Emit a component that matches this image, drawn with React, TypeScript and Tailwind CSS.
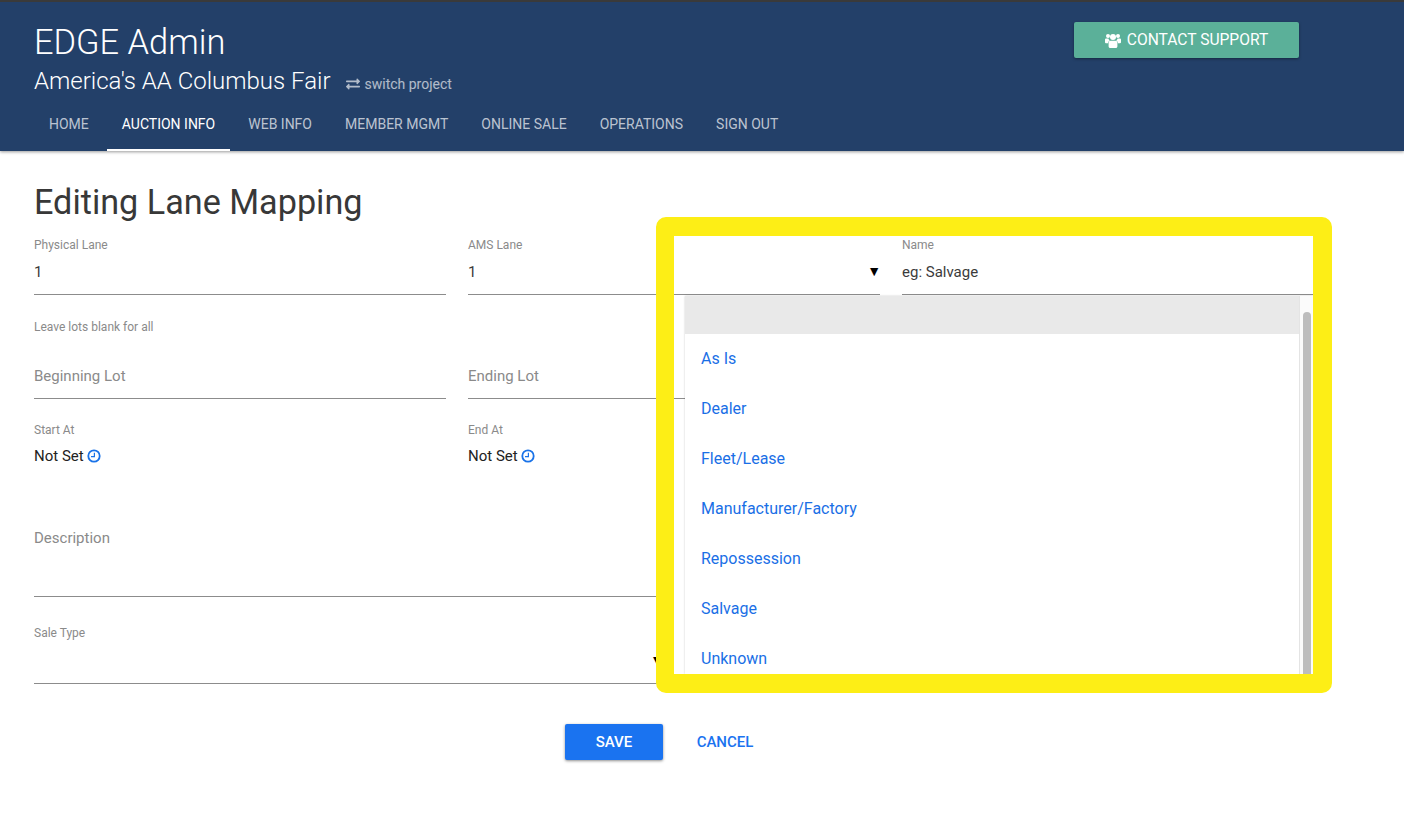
import { FaExchangeAlt } from "react-icons/fa";

const tabs = ["Home", "Auction Info", "Web Info", "Member Mgmt", "Online Sale", "Operations", "Sign Out"];
const saleTypes = ["As Is", "Dealer", "Fleet/Lease", "Manufacturer/Factory", "Repossession", "Salvage", "Unknown"];

function Clock() {
  return (
    <svg viewBox="0 0 14 14" className="ml-[3px] h-[14px] w-[14px]" fill="none" stroke="#1a73e8">
      <circle cx="7" cy="7" r="5.7" strokeWidth="1.8" />
      <path d="M7.4 3.8V7.6H4" strokeWidth="1.2" />
    </svg>
  );
}

function Users() {
  return (
    <svg viewBox="0 0 16 15" className="h-[15px] w-[16px]" fill="white">
      <circle cx="3" cy="3" r="2" />
      <circle cx="13" cy="3" r="2" />
      <circle cx="8" cy="4" r="3" />
      <path d="M0 6.5C0 5.8.6 5.4 1.2 5.4h2.2c.2.9.8 1.7 1.400 2.2-1 .5-1.600 1.400-1.700 2.600H.9C.4 10.200 0 9.800 0 9.300Z" />
      <path d="M16 6.500c0-.7-.6-1.100-1.200-1.100h-2.200c-.2.9-.8 1.700-1.400 2.200 1 .5 1.600 1.400 1.700 2.600h2.200c.5 0 .9-.4.900-.9Z" />
      <path d="M5.500 7.800h5c1.200 0 1.900.9 1.900 2.100v3.300c0 1-.7 1.800-1.700 1.800H5.300c-1 0-1.700-.8-1.700-1.800V9.900c0-1.200.7-2.100 1.900-2.100Z" />
    </svg>
  );
}

function Arrow() {
  return <span className="absolute right-[-1px] bottom-[16px] text-[14px] leading-none text-black">▼</span>;
}

function Field(props: { label?: string; value?: string; placeholder?: string; select?: boolean; className?: string }) {
  return (
    <div className={`relative flex flex-col justify-between border-b border-[#8c8c8c] ${props.className ?? "h-[59px]"}`}>
      <label className="h-[18px] text-[12px] leading-[18px] text-[#8a8a8a]">{props.label}</label>
      {props.value && <div className="mb-[12px] text-[15px] leading-[20px] text-[#3b3b3b]">{props.value}</div>}
      {props.placeholder && <div className="mb-[12px] text-[15px] leading-[20px] text-[#8a8a8a]">{props.placeholder}</div>}
      {props.select && <Arrow />}
    </div>
  );
}

export default function App() {
  return (
    <div className="relative min-h-[820px] bg-white font-['Roboto',sans-serif]">
      <header className="relative z-10 h-[151px] border-t-2 border-[#3a3a3a] bg-[#234069] shadow-[0_1px_3px_rgba(0,0,0,0.4)]">
        <div className="flex justify-between pl-[34px] pr-[105px]">
          <div>
            <h1 className="mt-[18px] text-[34.4px] leading-[44px] font-light text-white">EDGE Admin</h1>
            <div className="mt-[1px] flex items-baseline text-white">
              <span className="text-[24px] leading-[32px] font-light">America's AA Columbus Fair</span>
              <span className="relative top-[2px] ml-[16px] flex items-center gap-[4px] text-[14px] text-white/65">
                <FaExchangeAlt className="text-[14px]" />
                switch project
              </span>
            </div>
          </div>
          <button className="mt-[20px] flex h-[36px] w-[225px] items-center justify-center gap-[6px] rounded-[2px] bg-[#5bb099] text-[15.6px] text-white shadow-[0_1px_3px_rgba(0,0,0,0.4)]">
            <Users />
            <span className="mt-[2px]">CONTACT SUPPORT</span>
          </button>
        </div>
        <nav className="mt-[5px] flex gap-[3px] pl-[34px]">
          {tabs.map((tab) => (
            <a
              key={tab}
              className={`flex h-[49px] items-center border-b-2 px-[15px] pb-[2px] text-[14px] uppercase ${
                tab === "Auction Info" ? "border-white text-white" : "border-transparent text-white/70"
              }`}
            >
              {tab}
            </a>
          ))}
        </nav>
      </header>

      <main className="pl-[34px] pr-[90px]">
        <h2 className="mt-[29px] text-[34.2px] leading-[44px] text-[#383838]">Editing Lane Mapping</h2>

        <div className="mt-[12px] grid grid-cols-3 gap-x-[22px]">
          <Field label="Physical Lane" value="1" />
          <Field label="AMS Lane" value="1" select />
          <Field label="Name" value="eg: Salvage" />
        </div>

        <p className="mt-[24px] text-[12px] leading-[16px] text-[#8a8a8a]">Leave lots blank for all</p>

        <div className="mt-[16px] grid grid-cols-3 gap-x-[22px]">
          <Field placeholder="Beginning Lot" className="h-[48px]" />
          <Field placeholder="Ending Lot" className="h-[48px]" />
        </div>

        <div className="mt-[23px] grid grid-cols-3 gap-x-[22px]">
          {["Start At", "End At"].map((label) => (
            <div key={label}>
              <label className="block text-[12px] leading-[16px] text-[#8a8a8a]">{label}</label>
              <div className="mt-[8px] flex items-center text-[15px] leading-[20px] text-[#222222]">
                Not Set
                <Clock />
              </div>
            </div>
          ))}
        </div>

        <div className="mt-[48px] grid grid-cols-2 gap-x-[22px]">
          <div className="flex h-[83px] flex-col border-b border-[#8c8c8c] text-[15px] leading-[20px] text-[#8a8a8a]">
            <span className="mt-[14px]">Description</span>
          </div>
        </div>

        <div className="mt-[27px] grid grid-cols-2 gap-x-[22px]">
          <Field label="Sale Type" select className="h-[60px]" />
        </div>

        <div className="mt-[40px] flex justify-center pl-[4px]">
          <button className="h-[36px] w-[98px] rounded-[2px] bg-[#1a73f0] text-[15px] font-medium text-white shadow-[0_1px_3px_rgba(0,0,0,0.45)]">
            SAVE
          </button>
          <button className="h-[36px] w-[124px] text-[15px] font-medium text-[#1a73f0]">CANCEL</button>
        </div>
      </main>

      <div className="absolute left-[685px] top-[296px] flex h-[378px] w-[628px] overflow-hidden bg-white shadow-[0_0_2px_rgba(0,0,0,0.2)]">
        <ul className="flex-1">
          <li className="h-[38px] bg-[#e9e9e9]" />
          {saleTypes.map((type) => (
            <li key={type} className="flex h-[50px] items-center px-[16px] text-[16px] text-[#1a6fe6]">
              {type}
            </li>
          ))}
        </ul>
        <div className="w-[14px] border-l border-[#e4e4e4] bg-[#fbfbfb] pl-[3px] pt-[16px]">
          <div className="h-[400px] w-[8px] rounded-t-[4px] bg-[#bdbdbd]" />
        </div>
      </div>

      <div className="pointer-events-none absolute left-[656px] top-[217px] h-[476px] w-[676px] rounded-[10px] border-[18px] border-t-[19px] border-b-[19px] border-r-[19px] border-[#fdee16]" />
    </div>
  );
}
